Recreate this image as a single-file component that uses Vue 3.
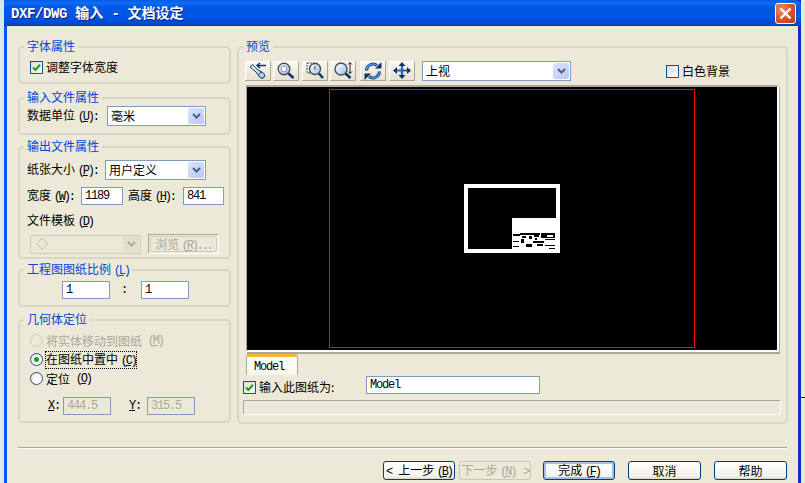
<script setup>
const tools = ['torch', 'zoom', 'zoomBox', 'zoomV', 'rotate', 'pan']
const bits = [
  [1, 16, 7, 2], [8, 15, 20, 2], [29, 15, 14, 5], [10, 18, 4, 2], [17, 18, 3, 3], [22, 17, 5, 2],
  [1, 23, 6, 1], [9, 21, 3, 4], [21, 23, 11, 2], [33, 21, 10, 1], [14, 26, 6, 3], [25, 26, 6, 2],
  [1, 28, 6, 1], [33, 27, 10, 1], [37, 30, 6, 1], [23, 20, 2, 2]
]
</script>

<template>
  <div class="screen">
    <div class="edge"></div>
    <div class="window">
      <header class="titlebar">
        <span class="title"><span class="tm">DXF/DWG</span> 输入 <span class="tm">-</span> 文档设定</span>
        <button class="close" aria-label="关闭">
          <svg width="15" height="15" viewBox="0 0 15 15"><path d="M2.500 2.500l10 10M12.500 2.500l-10 10" stroke="#fff" stroke-width="2.400" fill="none"/></svg>
        </button>
      </header>

      <div class="body">
        <div class="content">
          <aside class="left">
            <section class="group g1">
              <span class="legend">字体属性</span>
              <label class="row check-row">
                <span class="cb checked"><svg width="11" height="11" viewBox="0 0 11 11"><path d="M2 5.500l2.400 2.400L9 2.800" stroke="#21a121" stroke-width="2.200" fill="none"/></svg></span>
                调整字体宽度
              </label>
            </section>

            <section class="group g2">
              <span class="legend">输入文件属性</span>
              <div class="row">
                <span class="lbl">数据单位 <span class="m">(<u>U</u>):</span></span>
                <div class="combo c-unit"><span>毫米</span><i class="arrow"><svg width="9" height="6" viewBox="0 0 9 6"><path d="M1 1l3.500 3.500L8 1" stroke="#4d6185" stroke-width="2" fill="none"/></svg></i></div>
              </div>
            </section>

            <section class="group g3">
              <span class="legend">输出文件属性</span>
              <div class="row paper">
                <span class="lbl">纸张大小 <span class="m">(<u>P</u>):</span></span>
                <div class="combo c-paper"><span>用户定义</span><i class="arrow"><svg width="9" height="6" viewBox="0 0 9 6"><path d="M1 1l3.500 3.500L8 1" stroke="#4d6185" stroke-width="2" fill="none"/></svg></i></div>
              </div>
              <div class="row size">
                <span class="lbl">宽度 <span class="m">(<u>W</u>):</span></span>
                <div class="input i-w v">1189</div>
                <span class="lbl l-h">高度 <span class="m">(<u>H</u>):</span></span>
                <div class="input i-h v">841</div>
              </div>
              <div class="tpl-label">文件模板 <span class="m">(<u>D</u>)</span></div>
              <div class="row tpl">
                <div class="combo disabled c-tpl"><span class="diamond">◇</span><i class="arrow"><svg width="9" height="6" viewBox="0 0 9 6"><path d="M1 1l3.500 3.500L8 1" stroke="#aca899" stroke-width="2" fill="none"/></svg></i></div>
                <div class="browse-frame"><button class="browse">浏览 <span class="m">(<u>R</u>)...</span></button></div>
              </div>
            </section>

            <section class="group g4">
              <span class="legend">工程图图纸比例 <span class="m">(<u>L</u>)</span></span>
              <div class="row ratio">
                <div class="input i-r v">1</div>
                <span class="v colon">:</span>
                <div class="input i-r v">1</div>
              </div>
            </section>

            <section class="group g5">
              <span class="legend">几何体定位</span>
              <label class="radio-row muted"><span class="radio off"></span>将实体移动到图纸 <span class="m">(<u>M</u>)</span></label>
              <label class="radio-row"><span class="radio on"></span><span class="focus">在图纸中置中 <span class="m">(<u>C</u>)</span></span></label>
              <label class="radio-row"><span class="radio"></span>定位 <span class="m">(<u>O</u>)</span></label>
              <div class="row coords">
                <span class="v"><u>X</u>:</span>
                <div class="input dis v i-x">444.5</div>
                <span class="v l-y"><u>Y</u>:</span>
                <div class="input dis v i-y">315.5</div>
              </div>
            </section>
          </aside>

          <main class="group preview">
            <span class="legend">预览</span>
            <div class="toolbar">
              <button v-for="t in tools" :key="t" class="tool" :class="'t-' + t">
                <svg width="22" height="18" viewBox="0 0 22 18">
                  <defs>
                    <linearGradient :id="'gl' + t" x1="0" y1="0" x2="1" y2="1"><stop offset="0" stop-color="#fff"/><stop offset="1" stop-color="#9cc0e8"/></linearGradient>
                  </defs>
                  <template v-if="t === 'torch'">
                    <path d="M3 5l2-2.500 6 5.500 5.500 3q2.500 2.500.5 4.500t-4.500-.5L9 10z" :fill="'url(#gl' + t + ')'" stroke="#12336b"/>
                    <path d="M11.500 12.500l3.500-3" stroke="#12336b"/>
                    <path d="M10 3.500h9M13 1l-3 2.500 3 2.500" stroke="#12336b" stroke-width="1.500" fill="none"/>
                  </template>
                  <template v-else-if="t === 'zoom'">
                    <circle cx="9" cy="7" r="5.800" :fill="'url(#gl' + t + ')'" stroke="#4a5058" stroke-width="1.400"/>
                    <circle cx="9" cy="7" r="3" fill="#f4f8fd" stroke="#7f90a8"/>
                    <path d="M13.500 11.500l5 4.500" stroke="#12336b" stroke-width="2.600"/>
                  </template>
                  <template v-else-if="t === 'zoomBox'">
                    <rect x="3" y="1" width="10" height="10" fill="none" stroke="#444" stroke-dasharray="2 1"/>
                    <circle cx="11" cy="7" r="5.500" :fill="'url(#gl' + t + ')'" stroke="#4a5058" stroke-width="1.400"/>
                    <path d="M11 4v3.500" stroke="#444"/>
                    <path d="M15 11.500l4 4.500" stroke="#12336b" stroke-width="2.600"/>
                  </template>
                  <template v-else-if="t === 'zoomV'">
                    <circle cx="9" cy="7" r="6" :fill="'url(#gl' + t + ')'" stroke="#4a5058" stroke-width="1.400"/>
                    <path d="M13.500 11.500l5 4.500" stroke="#12336b" stroke-width="2.600"/>
                    <path d="M18 .5v11M16 2.500l2-2 2 2M16 9.500l2 2 2-2" stroke="#222" fill="none"/>
                  </template>
                  <template v-else-if="t === 'rotate'">
                    <path d="M4.500 8.500a6.500 6.500 0 0 1 10.500-5" stroke="#12336b" stroke-width="3" fill="none"/>
                    <path d="M17.500 9.500a6.500 6.500 0 0 1-10.500 5" stroke="#12336b" stroke-width="3" fill="none"/>
                    <path d="M4.500 8.500a6.500 6.500 0 0 1 10.500-5" stroke="#4f9ae8" stroke-width="1.500" fill="none"/>
                    <path d="M17.500 9.500a6.500 6.500 0 0 1-10.500 5" stroke="#4f9ae8" stroke-width="1.500" fill="none"/>
                    <path d="M13 6.500h6.500V0zM9 11.500H2.500V18z" fill="#12336b"/>
                  </template>
                  <template v-else>
                    <path d="M11 2v13M3 8.500h16" stroke="#2a62b8" stroke-width="2.200"/>
                    <path d="M11 0l3.500 4h-7zM11 17l3.500-4h-7zM2 8.500l4-3.500v7zM20 8.500l-4-3.500v7z" fill="#12336b"/>
                  </template>
                </svg>
              </button>
              <div class="combo c-view"><span>上视</span><i class="arrow"><svg width="9" height="6" viewBox="0 0 9 6"><path d="M1 1l3.500 3.500L8 1" stroke="#4d6185" stroke-width="2" fill="none"/></svg></i></div>
              <label class="white-bg"><span class="cb"></span>白色背景</label>
            </div>

            <div class="canvas">
              <div class="paper-frame"></div>
              <div class="drawing">
                <div class="block">
                  <span v-for="(b, i) in bits" :key="i" class="bit" :style="{ left: b[0] + 'px', top: b[1] + 'px', width: b[2] + 'px', height: b[3] + 'px' }"></span>
                  <span class="bit hole"></span>
                </div>
              </div>
            </div>

            <div class="tabs"><div class="tab v">Model</div></div>

            <div class="import-row">
              <label class="import-check">
                <span class="cb checked"><svg width="11" height="11" viewBox="0 0 11 11"><path d="M2 5.500l2.400 2.400L9 2.800" stroke="#21a121" stroke-width="2.200" fill="none"/></svg></span>
                输入此图纸为:
              </label>
              <div class="input i-name v">Model</div>
            </div>
            <div class="progress"></div>
          </main>
        </div>

        <footer class="buttons">
          <div class="wizard">
            <button class="btn narrow"><span class="m lt">&lt;</span>上一步 <span class="m">(<u>B</u>)</span></button>
            <button class="btn narrow disabled">下一步 <span class="m">(<u>N</u>) <span class="gt">&gt;</span></span></button>
          </div>
          <button class="btn narrow primary">完成 <span class="m">(<u>F</u>)</span></button>
          <button class="btn">取消</button>
          <button class="btn">帮助</button>
        </footer>
      </div>
    </div>
    <div class="outside"><i class="stray"></i></div>
  </div>
</template>

<style>
html, body { margin: 0; background: #e9e9e9; }
</style>

<style scoped>
.screen {
  width: 805px; height: 483px; overflow: hidden; display: flex;
  font: 12px/14px "Noto Sans CJK SC", sans-serif; color: #000; background: #e9e9e9;
}
.edge { width: 4px; flex: none; background: #d6e8e8; }
.window {
  width: 797px; height: 483px; box-sizing: border-box; display: flex; flex-direction: column; flex: none;
  background: #0831d9; border-left: 3px solid #0a55ee; border-right: 3px solid #0a2fc4;
}
.outside { flex: 1; position: relative; }
.stray { position: absolute; left: 0; right: 0; top: 397px; height: 1px; background: #222; }
.m { font-family: "Liberation Mono", monospace; font-size: 12px; letter-spacing: -2.2px; }
.v { font-family: "Liberation Mono", monospace; letter-spacing: -1.2px; }
.lt { margin-right: 7px; }
.gt { margin-left: 3px; }
u { text-decoration: underline; }

.titlebar {
  height: 26px; flex: none; margin: 0 -3px; display: flex; align-items: center; justify-content: space-between;
  padding: 0 5px 0 7px;
  background: linear-gradient(180deg, #0a5ae6 0%, #0b6cf5 12%, #0058e6 30%, #0055e5 70%, #0048c8 92%, #003bb0 100%);
  border-radius: 5px 5px 0 0;
}
.title { color: #fff; font-size: 14px; font-weight: 700; text-shadow: 1px 1px 0 #0a1f7a; white-space: pre; word-spacing: 5px; }
.tm { font-family: "Liberation Mono", monospace; font-weight: 700; letter-spacing: -0.4px; }
.close {
  width: 21px; height: 21px; padding: 0; display: flex; align-items: center; justify-content: center;
  background: radial-gradient(circle at 30% 30%, #ee8a66, #d8512a 55%, #b93a14); border: 1px solid #fff; border-radius: 3px;
}
.body { flex: 1; background: #ece9d8; display: flex; flex-direction: column; min-height: 0; }
.content { display: flex; gap: 6px; padding: 20px 0 0 11px; height: 378px; }
.left { width: 213px; display: flex; flex-direction: column; }
.group { position: relative; box-sizing: border-box; border: 2px solid #d9d6c3; border-radius: 5px; }
.legend {
  position: absolute; top: -9px; left: 4px; padding: 0 3px; background: #ece9d8; color: #0046d5; line-height: 14px; white-space: nowrap;
}
.row { display: flex; align-items: center; }

.g1 { height: 38px; margin-bottom: 13px; }
.check-row { margin: 12px 0 0 10px; gap: 3px; }
.g2 { height: 38px; margin-bottom: 11px; }
.g2 .row { padding: 7px 0 0 7px; }
.g2 .lbl { width: 80px; }
.g3 { height: 113px; margin-bottom: 10px; }
.paper { padding: 12px 0 0 7px; }
.paper .lbl { width: 78px; }
.size { padding: 7px 0 0 7px; }
.size .lbl { width: 54px; }
.size .l-h { width: 55px; margin-left: 5px; }
.tpl-label { padding: 8px 0 0 7px; }
.tpl { padding: 5px 0 0 10px; gap: 7px; }
.g4 { height: 38px; margin-bottom: 12px; }
.ratio { padding: 10px 0 0 42px; }
.colon { width: 31px; box-sizing: border-box; text-align: center; padding-right: 3px; }
.g5 { height: 104px; }
.radio-row { display: flex; align-items: center; height: 19px; padding-left: 10px; gap: 3px; white-space: pre; }
.radio-row:first-of-type { margin-top: 10px; }
.muted { color: #aca899; }
.focus { outline: 1px dotted #000; outline-offset: 0; line-height: 14px; }
.coords { padding: 9px 0 0 28px; }
.i-x { margin-left: 3px; }
.l-y { margin-left: 18px; }
.i-y { margin-left: 6px; }

.input {
  box-sizing: border-box; height: 18px; background: #fff; border: 1px solid #7f9db9; line-height: 17px; padding-left: 3px; white-space: nowrap; flex: none;
}
.input.dis { background: #ece9d8; color: #aca899; width: 48px; }
.i-w { width: 42px; }
.i-h { width: 41px; }
.i-r { width: 48px; }
.i-name { width: 174px; }

.combo {
  box-sizing: border-box; height: 20px; background: #fff; border: 1px solid #7f9db9; display: flex; align-items: center;
  justify-content: space-between; padding: 0 1px 0 3px; flex: none;
}
.c-unit { width: 99px; }
.c-paper { width: 101px; }
.c-view { width: 149px; margin-left: 5px; }
.c-tpl { width: 111px; height: 19px; background: #ece9d8; border-color: #cfccb9; color: #aca899; }
.arrow {
  width: 16px; height: 16px; border-radius: 2px; display: flex; align-items: center; justify-content: center;
  background: linear-gradient(135deg, #dce6fb, #b5c8f3);
}
.disabled .arrow { background: #e3e0cf; }
.diamond { color: #aca899; padding-left: 2px; }
.browse-frame {
  box-sizing: border-box; width: 71px; height: 20px; padding: 1px; background: #ece9d8;
  border-top: 1px solid #aca899; border-left: 1px solid #aca899; border-right: 1px solid #fff; border-bottom: 1px solid #fff;
}
.browse {
  box-sizing: border-box; display: block; width: 100%; height: 100%; padding: 0; background: #ece9d8; border: 1px solid #cfccb9; border-radius: 3px;
  font: inherit; color: #aca899; white-space: pre;
}

.preview { width: 551px; height: 378px; padding: 13px 7px 0 6px; }
.toolbar { display: flex; align-items: center; height: 20px; gap: 2px; }
.tool {
  width: 26px; height: 20px; padding: 0; display: flex; align-items: center; justify-content: center; flex: none;
  background: linear-gradient(180deg, #fbfaf4, #e4e1d0); border: 0; border-right: 1px solid #aca899; border-bottom: 1px solid #aca899;
  box-shadow: inset 1px 1px 0 #fff; border-radius: 1px;
}
.t-zoomBox { margin-left: 1px; }
.t-rotate { margin-left: 2px; }
.t-pan { margin-left: 1px; }
.white-bg { display: flex; align-items: center; gap: 3px; margin-left: 93px; }
.cb {
  box-sizing: border-box; width: 13px; height: 13px; flex: none; border: 1px solid #1c5180; display: inline-flex; align-items: center; justify-content: center;
  background: linear-gradient(135deg, #dcdcd7, #fff);
}
.canvas {
  position: relative; box-sizing: border-box; width: 533px; height: 267px; margin: 4px 0 0 1px; background: #000;
  border-top: 2px solid #aca899; border-left: 1px solid #aca899; border-right: 2px solid #fff; border-bottom: 2px solid #fff;
  box-shadow: 1px 2px 0 #aca899;
}
.paper-frame { position: absolute; left: 82px; top: 2px; width: 366px; height: 259px; box-sizing: border-box; border: 1px solid #f00; }
.drawing { position: absolute; left: 217px; top: 97px; width: 96px; height: 69px; box-sizing: border-box; border: 4px solid #fff; }
.block { position: absolute; right: 0; bottom: 0; width: 44px; height: 31px; background: #fff; }
.bit { position: absolute; background: #000; }
.bit.hole { left: 35px; top: 17px; width: 6px; height: 2px; background: #fff; }

.tabs { height: 21px; margin-top: 2px; padding-left: 1px; }
.tab {
  box-sizing: border-box; width: 52px; height: 21px; padding: 4px 0 0 7px; background: linear-gradient(#fff, #f7f6f0);
  border-top: 3px solid #f8b636; border-left: 1px solid #aca899; border-right: 1px solid #aca899; border-radius: 3px 3px 0 0; line-height: 13px;
}
.import-row { display: flex; align-items: flex-start; height: 18px; margin-top: 1px; }
.import-check { display: flex; align-items: center; gap: 3px; width: 123px; flex: none; margin: 4px 0 0 -2px; }
.progress {
  box-sizing: border-box; width: 538px; height: 15px; margin: 6px 0 0 -2px; border-top: 1px solid #aca899; border-left: 1px solid #aca899;
  border-right: 1px solid #fff; border-bottom: 1px solid #fff;
}

.buttons {
  margin: 23px 11px 0 11px; height: 34px; border-top: 1px solid #aca899; box-shadow: inset 0 1px 0 #fff;
  display: flex; justify-content: flex-end; align-items: flex-start; gap: 13px; padding-top: 13px;
}
.wizard { display: flex; gap: 4px; margin-right: -1px; }
.btn {
  box-sizing: border-box; width: 73px; height: 19px; padding: 0; font: inherit; color: #000; white-space: pre; line-height: 15px;
  background: linear-gradient(180deg, #fff, #f3f2ea 85%, #d9d6c8); border: 1px solid #003c74; border-radius: 3px;
}
.btn.narrow { width: 72px; }
.btn.disabled { background: #ece9d8; border-color: #c9c7ba; color: #aca899; }
.btn.primary { box-shadow: inset 0 0 0 2px #a6bdec; }

.radio {
  box-sizing: border-box; width: 13px; height: 13px; border-radius: 50%; border: 1px solid #1c5180; flex: none; display: inline-flex; align-items: center; justify-content: center;
  background: radial-gradient(circle at 65% 65%, #fff 35%, #dcdcd7);
}
.radio.off { border-color: #cfccb9; background: #ece9d8; }
.radio.on::after { content: ""; width: 5px; height: 5px; border-radius: 50%; background: #21a121; }
</style>
